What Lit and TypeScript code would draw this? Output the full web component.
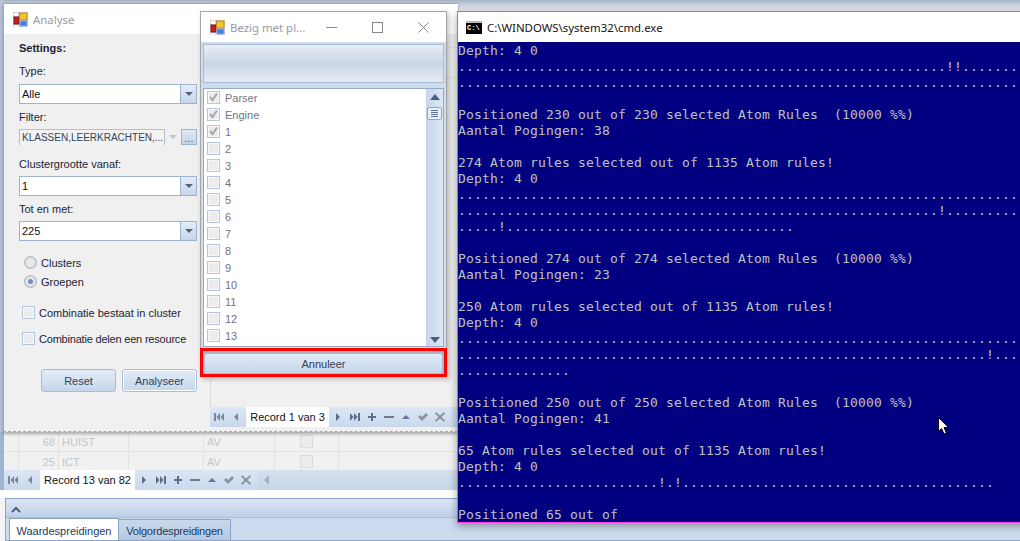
import { LitElement, html, css, svg } from "lit";
import { customElement } from "lit/decorators.js";

const d = (n: number) => ".".repeat(n);
const consoleLines = [
  "Depth: 4 0",
  d(61) + "!!" + d(7),
  d(70),
  "",
  "Positioned 230 out of 230 selected Atom Rules  (10000 %%)",
  "Aantal Pogingen: 38",
  "",
  "274 Atom rules selected out of 1135 Atom rules!",
  "Depth: 4 0",
  d(70),
  d(60) + "!" + d(9),
  d(5) + "!" + d(36),
  "",
  "Positioned 274 out of 274 selected Atom Rules  (10000 %%)",
  "Aantal Pogingen: 23",
  "",
  "250 Atom rules selected out of 1135 Atom rules!",
  "Depth: 4 0",
  d(70),
  d(66) + "!" + d(3),
  d(14),
  "",
  "Positioned 250 out of 250 selected Atom Rules  (10000 %%)",
  "Aantal Pogingen: 41",
  "",
  "65 Atom rules selected out of 1135 Atom rules!",
  "Depth: 4 0",
  d(25) + "!.!" + d(39),
  "",
  "Positioned 65 out of",
];

const appIcon = html`<svg class="appicon" width="15" height="15" viewBox="0 0 15 15">
  <rect x="0" y="0" width="15" height="15" fill="#d9d9d9"/>
  <rect x="0.5" y="0.5" width="5" height="4" fill="#fff" stroke="#bbb" stroke-width=".5"/>
  <rect x="1" y="5" width="5" height="7" fill="#c8201c" stroke="#7a1512" stroke-width="1"/>
  <rect x="6.5" y="1" width="7.5" height="7" fill="#f5c52c" stroke="#b98a14" stroke-width="1"/>
  <rect x="7" y="9" width="7" height="5" fill="#3f7fe0" stroke="#8ab0ea" stroke-width="1"/>
  <rect x="1" y="13" width="4" height="2" fill="#fff"/>
</svg>`;

const navIcons: Record<string, unknown> = {
  first: svg`<path d="M0 1h2v8H0zM2.500 5 6 1v8zM6.500 5 10 1v8z" fill="#76869b"/>`,
  prev: svg`<path d="M7 1v8L3 5z" fill="#76869b"/>`,
  next: svg`<path d="M3 1v8l4-4z" fill="#5d6f88"/>`,
  last: svg`<path d="M0 1l3.500 4L0 9zM4 1l3.500 4L4 9zM8 1h2v8H8z" fill="#5d6f88"/>`,
  plus: svg`<path d="M4 1h2v3h3v2H6v3H4V6H1V4h3z" fill="#5d6f88"/>`,
  minus: svg`<path d="M0 4h10v2H0z" fill="#6a7b92"/>`,
  up: svg`<path d="M1 7h8L5 3z" fill="#65779a"/>`,
  check: svg`<path d="M0 5l2-2 2 2 4-4 2 2-6 6z" fill="#8c949e"/>`,
  x: svg`<path d="M1 0l4 3.500L9 0l1 1.500L6.500 5 10 8.500 9 10 5 6.500 1 10 0 8.500 3.500 5 0 1.500z" fill="#8c949e"/>`,
};

const navIcon = (n: string) =>
  html`<span class="navcell"><svg width="10" height="10" viewBox="0 0 10 10">${navIcons[n]}</svg></span>`;

const navBar = (label: string, cls: string) => html`
  <div class="nav ${cls}">
    ${navIcon("first")}${navIcon("prev")}
    <span class="record">${label}</span>
    ${["next", "last", "plus", "minus", "up", "check", "x"].map(navIcon)}
    <span class="navrest"><svg width="8" height="10" viewBox="0 0 8 10"><path d="M7 0v10L2 5z" fill="#9fb0c6"/></svg></span>
  </div>`;

const combo = (value: string, cls = "") => html`
  <div class="combo ${cls}">
    <span class="value">${value}</span>
    <span class="drop"><svg width="8" height="5" viewBox="0 0 8 5"><path d="M0 0h8L4 4z" fill="#4f6280"/></svg></span>
  </div>`;

const check = (checked: boolean) => html`
  <span class="cb">${checked
    ? html`<svg width="11" height="11" viewBox="0 0 11 11"><path d="M2 5l2.500 3L9 1.500" fill="none" stroke="#a8a8a8" stroke-width="2"/></svg>`
    : ""}</span>`;

const listRows = ["Parser", "Engine", ...Array.from({ length: 13 }, (_, i) => String(i + 1)), ""];

@customElement("app-root")
export class AppRoot extends LitElement {
  static styles = css`
    :host { display: block; width: 1020px; height: 541px; }
    * { box-sizing: border-box; }
    .desktop {
      position: relative; width: 1020px; height: 541px; overflow: hidden;
      font: 11px "Liberation Sans", Arial, sans-serif; color: #1a1a2a;
      display: flex; flex-direction: column; background: #f4f4f4;
    }
    .backtop {
      flex: 0 0 432px;
      background: linear-gradient(#a6b3c6 0, #c4ccd8 4px, #eceef1 12px, #f2f2f2 30px);
      border-left: 3px solid #b7c6da;
    }
    .grid { flex: 0 0 38px; overflow: hidden; background: #f1f1f1; border-left: 4px solid #9fb4d0; color: #c6c6c6; font-size: 11px; }
    .grow { display: grid; grid-template-columns: 15px 40px 70px 75px 71px 64px 1fr; height: 20px; border-bottom: 1px solid #e3e3e3; }
    .grow > span { border-right: 1px solid #e3e3e3; display: flex; align-items: center; padding-left: 3px; }
    .grow > span.num { justify-content: flex-end; padding-right: 3px; }
    .grow > span.c { justify-content: center; padding: 0; }
    .grow > span:last-child { border-right: 0; }
    .gcb { width: 13px; height: 13px; border: 1px solid #dcdcdc; background: #ececec; }
    .nav { display: flex; height: 20px; align-items: stretch; background: linear-gradient(#dce7f5, #c9d8ec); }
    .nav.back { flex: 0 0 20px; border-left: 4px solid #9fb4d0; }
    .navcell { flex: 0 0 17px; display: flex; align-items: center; justify-content: center; }
    .record { flex: 0 0 95px; margin-left: 2px; background: #fff; color: #111; display: flex; align-items: center; justify-content: center; font-size: 11px; white-space: nowrap; }
    .nav.pane .record { flex-basis: 83px; }
    .navrest { flex: 1; margin-left: 4px; display: flex; align-items: center; padding-left: 4px; background: linear-gradient(#d4e0ef, #c6d5e8); }
    .white { flex: 0 0 8px; background: #fff; }
    .panel { flex: 1; background: #cddbee; border-bottom: 1px solid #8ba4c8; margin-left: 5px; border-left: 1px solid #8ba4c8; border-top: 1px solid #8ba4c8; display: flex; flex-direction: column; }
    .panelhead { flex: 0 0 19px; background: linear-gradient(#dbe6f5, #bed0e8); border-bottom: 1px solid #a9bdd8; padding: 5px 0 0 5px; }
    .tabs { flex: 1; display: flex; padding-left: 3px; align-items: flex-end; font-size: 11px; }
    .tab { height: 22px; display: flex; align-items: center; justify-content: center; color: #1e3a60; white-space: nowrap; padding-top: 2px; }
    .tab.on { width: 110px; background: #fff; border: 1px solid #8ba4c8; border-bottom: 0; }
    .tab.off { width: 112px; height: 21px; background: linear-gradient(#c9d9ec, #b4c9e2); border: 1px solid #8ba4c8; border-bottom: 0; border-left: 0; letter-spacing: -.2px; }

    .win { position: absolute; display: flex; flex-direction: column; }
    .title { flex: 0 0 auto; background: #fff; display: flex; align-items: center; font: 11.4px "Noto Sans", sans-serif; color: #9a9aa2; white-space: nowrap; }
    .appicon { flex: none; }

    .analyse { left: 3px; top: 3px; width: 455px; height: 429px; background: #f0f0f0; border-top: 1px solid #a8a8a8; border-left: 1px solid #a8a8a8; border-bottom: 1px dashed #a8a8a8; box-shadow: 0 2px 3px rgba(0,0,0,.3); }
    .analyse .title { height: 30px; padding-left: 9px; gap: 5px; }
    .abody { flex: 1; display: flex; min-height: 0; }
    .form { flex: 0 0 206px; padding: 8px 0 0 15px; display: flex; flex-direction: column; color: #1a2438; }
    .form label { display: block; height: 13px; line-height: 13px; white-space: nowrap; }
    .form .h { font-weight: bold; margin-bottom: 10px; }
    .combo { width: 178px; height: 20px; background: #fff; border: 1px solid #9fb3cf; display: flex; align-items: stretch; flex: none; margin-top: 5px; margin-bottom: 7px; }
    .combo.first { margin-top: 6px; }
    .combo .value { flex: 1; padding-left: 2px; display: flex; align-items: center; overflow: hidden; white-space: nowrap; color: #111; }
    .drop { flex: 0 0 16px; border-left: 1px solid #9fb3cf; background: linear-gradient(#e4edf8, #c6d6ea); display: flex; align-items: center; justify-content: center; }
    .filterrow { display: flex; margin-top: 5px; height: 16px; margin-bottom: 13px; overflow: hidden; flex: none; }
    .filterbox { width: 146px; height: 20px; background: #f2f2f2; border: 1px solid #b0c0d6; padding-left: 2px; color: #33415e; font-size: 10px; line-height: 16px; white-space: nowrap; overflow: hidden; }
    .filterdrop { width: 16px; display: flex; align-items: center; justify-content: center; }
    .dots { width: 16px; background: linear-gradient(#dfe9f6, #c3d4ea); border: 1px solid #9fb3cf; color: #3d5580; text-align: center; line-height: 16px; }
    .radio { display: flex; align-items: center; gap: 4px; height: 13px; margin: 0 0 6px 5px; white-space: nowrap; }
    .radio.top { margin-top: 8px; }
    .radio.last { margin-bottom: 18px; }
    .rc { width: 13px; height: 13px; border-radius: 50%; border: 1px solid #a8b4c4; background: #e8e8e8; box-shadow: inset 0 0 0 1px #d4d4d4; display: flex; align-items: center; justify-content: center; flex: none; }
    .rc.on::after { content: ""; width: 5px; height: 5px; border-radius: 50%; background: #6d8fc2; }
    .cbrow { display: flex; align-items: center; gap: 4px; height: 13px; margin: 0 0 13px 3px; white-space: nowrap; }
    .cbrow.tight { letter-spacing: -.2px; }
    .cb { width: 13px; height: 13px; flex: none; border: 1px solid #b6c6dc; background: #ececec; box-shadow: inset 0 0 0 1px #f8f8f8; display: flex; align-items: center; justify-content: center; }
    .btns { display: flex; gap: 6px; margin: 11px 0 0 22px; }
    .btn { width: 75px; height: 23px; border: 1px solid #a9bcd5; border-radius: 3px; background: linear-gradient(#e2ecf8, #c5d6ea); display: flex; align-items: center; justify-content: center; color: #33405a; }
    .btn.def { box-shadow: inset 0 0 0 1px #fff; }
    .rpane { flex: 1; display: flex; flex-direction: column; margin: 0 0 4px 0; min-width: 0; }
    .rgrid { flex: 1; border-left: 1px solid #dcdcdc; background: linear-gradient(#f0f0f0 0 13px, #e4e4e4 13px 14px, #f0f0f0 14px 43px, #e4e4e4 43px 44px, #f0f0f0 44px); }

    .bezig { left: 200px; top: 11px; width: 247px; height: 366px; background: #cfdcec; border: 1px solid #a6a6a6; border-bottom: 0; box-shadow: 2px 2px 5px rgba(0,0,0,.25); }
    .bezig .title { height: 30px; padding-left: 9px; gap: 5px; }
    .ttext { flex: 1; }
    .wbtns { display: flex; align-items: center; margin-right: 17px; gap: 35px; }
    .progress { margin: 2px 2px 0 2px; height: 39px; flex: none; background: linear-gradient(#e6edf5, #c9d6e5 50%, #e3ebf4); border: 1px solid #a9bdd7; }
    .list { margin: 5px 2px 0; height: 259px; flex: none; background: #fff; border: 1px solid #94a9c8; display: flex; overflow: hidden; }
    .rows { flex: 1; padding: 0 0 0 3px; overflow: hidden; color: #73737f; }
    .row { height: 17px; display: flex; align-items: center; gap: 5px; }
    .sbar { flex: 0 0 17px; background: linear-gradient(90deg, #c5d5e9, #dde7f4); display: flex; flex-direction: column; align-items: center; padding-top: 5px; }
    .sbar .dn { margin-top: auto; margin-bottom: 3px; }
    .thumb { width: 15px; height: 13px; margin-top: 7px; border: 1px solid #8fa6c6; border-radius: 2px; background: #e6eef8; display: flex; flex-direction: column; justify-content: center; gap: 1px; padding: 0 3px; }
    .thumb i { display: block; height: 1px; background: #62779a; }
    .redbox { margin-top: 1px; margin-left: -1px; margin-right: -1px; height: 29px; border: 3px solid #f00; background: #a9b3c1; padding: 2px 1px 0 1px; flex: none; }
    .annuleer { height: 21px; border: 1px solid #a9bcd5; border-radius: 3px; background: linear-gradient(#e2ecf8, #c5d6ea); display: flex; align-items: center; justify-content: center; color: #33405a; }

    .console { left: 457px; top: 11px; width: 570px; height: 512px; background: #000080; border: 1px solid #ff3be8; border-right: 0; box-shadow: 0 3px 8px rgba(0,0,0,.35); }
    .console .title { height: 30px; padding-left: 8px; gap: 5px; color: #111; }
    .cicon { width: 16px; height: 13px; background: #000; border-top: 2px solid #bbb; color: #fff; font: bold 7px/10px "Liberation Mono", monospace; overflow: hidden; flex: none; padding-left: 1px; }
    .cbody { flex: 1; overflow: hidden; padding-top: 1px; color: #c0c0c0; font: 13px/16px "DejaVu Sans Mono", monospace; letter-spacing: .174px; }
    .cline { height: 16px; white-space: pre; }
    .cursor { position: absolute; left: 938px; top: 417px; }
  `;

  render() {
    return html`
      <div class="desktop">
        <div class="backtop"></div>
        <div class="grid">
          <div class="grow"><span></span><span class="num">68</span><span>HUIST</span><span></span><span>AV</span><span class="c"><i class="gcb"></i></span><span></span></div>
          <div class="grow"><span></span><span class="num">25</span><span>ICT</span><span></span><span>AV</span><span class="c"><i class="gcb"></i></span><span></span></div>
        </div>
        ${navBar("Record 13 van 82", "back")}
        <div class="white"></div>
        <div class="panel">
          <div class="panelhead"><svg width="10" height="8" viewBox="0 0 10 8"><path d="M1 6l4-4 4 4" fill="none" stroke="#4a5f80" stroke-width="2"/></svg></div>
          <div class="tabs"><div class="tab on">Waardespreidingen</div><div class="tab off">Volgordespreidingen</div></div>
        </div>

        <div class="win analyse">
          <div class="title">${appIcon}<span>Analyse</span></div>
          <div class="abody">
            <div class="form">
              <label class="h">Settings:</label>
              <label>Type:</label>
              ${combo("Alle", "first")}
              <label>Filter:</label>
              <div class="filterrow">
                <div class="filterbox">KLASSEN,LEERKRACHTEN,...</div>
                <span class="filterdrop"><svg width="8" height="5" viewBox="0 0 8 5"><path d="M0 0h8L4 4z" fill="#c0c6d0"/></svg></span>
                <span class="dots">...</span>
              </div>
              <label>Clustergrootte vanaf:</label>
              ${combo("1")}
              <label>Tot en met:</label>
              ${combo("225")}
              <div class="radio top"><span class="rc"></span>Clusters</div>
              <div class="radio last"><span class="rc on"></span>Groepen</div>
              <div class="cbrow">${check(false)}Combinatie bestaat in cluster</div>
              <div class="cbrow tight">${check(false)}Combinatie delen een resource</div>
              <div class="btns"><div class="btn">Reset</div><div class="btn def">Analyseer</div></div>
            </div>
            <div class="rpane">
              <div class="rgrid"></div>
              ${navBar("Record 1 van 3", "pane")}
            </div>
          </div>
        </div>

        <div class="win bezig">
          <div class="title">${appIcon}<span class="ttext">Bezig met pl...</span>
            <span class="wbtns">
              <svg width="11" height="11" viewBox="0 0 11 11"><path d="M0 5.500h11" stroke="#888" fill="none"/></svg>
              <svg width="11" height="11" viewBox="0 0 11 11"><rect x=".5" y=".5" width="10" height="10" fill="none" stroke="#888"/></svg>
              <svg width="11" height="11" viewBox="0 0 11 11"><path d="M.5.500l10 10M10.500.500l-10 10" stroke="#888" fill="none"/></svg>
            </span>
          </div>
          <div class="progress"></div>
          <div class="list">
            <div class="rows">
              ${listRows.map((r, i) => html`<div class="row">${check(i < 3)}<span>${r}</span></div>`)}
            </div>
            <div class="sbar">
              <svg width="10" height="6" viewBox="0 0 10 6"><path d="M0 6h10L5 0z" fill="#4a5f80"/></svg>
              <div class="thumb"><i></i><i></i><i></i><i></i></div>
              <svg class="dn" width="10" height="6" viewBox="0 0 10 6"><path d="M0 0h10L5 6z" fill="#4a5f80"/></svg>
            </div>
          </div>
          <div class="redbox"><div class="annuleer">Annuleer</div></div>
        </div>

        <div class="win console">
          <div class="title"><span class="cicon">C:\\</span><span>C:\\WINDOWS\\system32\\cmd.exe</span></div>
          <div class="cbody">${consoleLines.map((l) => html`<div class="cline">${l}</div>`)}</div>
        </div>

        <svg class="cursor" width="12" height="19" viewBox="0 0 12 19"><path d="M.5.500V14.500L3.500 11.500 6 17l2.500-1L6 10.500h4.500z" fill="#fff" stroke="#000"/></svg>
      </div>
    `;
  }
}
